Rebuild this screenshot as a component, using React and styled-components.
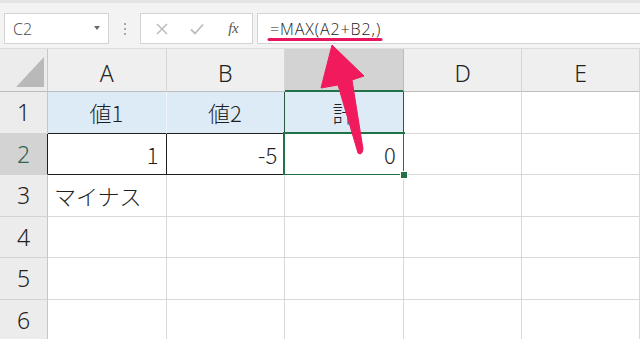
import React from "react";
import styled, { createGlobalStyle } from "styled-components";

const Global = createGlobalStyle`
  html, body { margin: 0; padding: 0; background: #fff; overflow: hidden; }
  #root { width: 640px; height: 339px; }
`;

const Page = styled.div`
  position: relative;
  width: 640px;
  height: 339px;
  overflow: hidden;
  background: #fff;
  font-family: "Noto Sans", "Noto Sans CJK JP", sans-serif;
`;

const Toolbar = styled.div`
  display: flex;
  align-items: flex-start;
  box-sizing: border-box;
  height: 49px;
  padding: 10px 0 0 4px;
  background: #f3f3f3;
  border-top: 3px solid #e4e4e4;
  border-bottom: 1px solid #dcdcdc;
`;

const Box = styled.div`
  box-sizing: border-box;
  height: 31px;
  background: #fff;
  border: 1px solid #d4d4d4;
  display: flex;
  align-items: center;
`;

const NameBox = styled(Box)`
  width: 105px;
  padding: 0 8px 0 8px;
  justify-content: space-between;
  font-family: "Open Sans", "Liberation Sans", Arial, sans-serif;
  font-weight: 300;
  font-size: 16px;
  color: #444;
`;

const Caret = styled.span`
  width: 0;
  height: 0;
  border-left: 3.5px solid transparent;
  border-right: 3.5px solid transparent;
  border-top: 4px solid #6a6a6a;
  margin-top: -2px;
`;

const Grip = styled.div`
  width: 31px;
  height: 31px;
  display: flex;
  flex-direction: column;
  align-items: center;
  justify-content: center;
  gap: 3px;
  & > span {
    width: 2px;
    height: 2px;
    background: #a8a8a8;
  }
`;

const FxBox = styled(Box)`
  width: 113px;
  justify-content: space-around;
  padding: 0 4px 0 4px;
`;

const Fx = styled.span`
  font-family: "Liberation Serif", "DejaVu Serif", serif;
  font-style: italic;
  font-size: 15px;
  color: #555;
  letter-spacing: -0.5px;
  margin-left: 4px;
`;

const FormulaBox = styled(Box)`
  flex: 1;
  margin-left: 4px;
  margin-right: -4px;
  padding-left: 12px;
  font-family: "Open Sans", "Liberation Sans", Arial, sans-serif;
  font-weight: 300;
  font-size: 16px;
  letter-spacing: 0.9px;
  color: #222;
`;

const Sheet = styled.div`
  display: grid;
  grid-template-columns: 48px repeat(4, 118.6px) 1fr;
  grid-template-rows: 43px repeat(6, 41.5px);
`;

const Corner = styled.div`
  box-sizing: border-box;
  background: #ececec;
  border-right: 1px solid #c8c8c8;
  border-bottom: 1px solid #bdbdbd;
  display: flex;
  align-items: flex-end;
  justify-content: flex-end;
  padding: 0 3px 4px 0;
`;

const Tri = styled.div`
  width: 0;
  height: 0;
  border-left: 28px solid transparent;
  border-bottom: 30px solid #b9b9b9;
`;

const ColHead = styled.div`
  box-sizing: border-box;
  background: ${(p) => (p.$selected ? "#d3d3d3" : "#efefef")};
  border-right: 1px solid ${(p) => (p.$selected ? "#bdbdbd" : "#d6d6d6")};
  border-bottom: ${(p) => (p.$selected ? "2px solid #217346" : "1px solid #bdbdbd")};
  display: flex;
  align-items: center;
  justify-content: center;
  padding-top: 6px;
  font-size: 23px;
  font-weight: 300;
  color: #222;
`;

const RowHead = styled.div`
  box-sizing: border-box;
  background: ${(p) => (p.$selected ? "#d3d3d3" : "#ececec")};
  border-right: 1px solid ${(p) => p.$edge || "#c6c6c6"};
  border-bottom: 1px solid #d2d2d2;
  display: flex;
  align-items: center;
  justify-content: center;
  font-size: 23px;
  font-weight: 300;
  color: ${(p) => (p.$selected ? "#2f6450" : "#222")};
`;

const Cell = styled.div`
  position: relative;
  box-sizing: border-box;
  background: ${(p) => p.$fill || "#fff"};
  border-right: 1px solid ${(p) => p.$right || "#d9d9d9"};
  border-bottom: 1px solid ${(p) => p.$bottom || "#d9d9d9"};
  display: flex;
  align-items: center;
  justify-content: ${(p) => (p.$align === "right" ? "flex-end" : p.$align === "center" ? "center" : "flex-start")};
  padding: 0 7px 0 6px;
  font-family: "Noto Sans CJK JP", "Noto Sans", sans-serif;
  font-weight: 300;
  font-size: 22px;
  color: #1f1f1f;
  white-space: nowrap;

  ${(p) =>
    p.$active &&
    `
    &::after {
      content: "";
      position: absolute;
      left: -2px; top: -2px; right: -2px; bottom: -2px;
      border: 2px solid #217346;
      pointer-events: none;
    }
    &::before {
      content: "";
      position: absolute;
      right: -5px; bottom: -5px;
      width: 6px; height: 6px;
      background: #217346;
      border: 1px solid #fff;
      z-index: 2;
    }
  `}
`;

const Overlay = styled.svg`
  position: absolute;
  left: 0;
  top: 0;
  pointer-events: none;
`;

const BLUE = "#ddebf7";
const DARK = "#1f1f1f";
const DGREEN = "#2c5a3f";

const cols = ["A", "B", "C", "D", "E"];

const rows = [
  {
    n: 1,
    cells: [
      { t: "値1", align: "center", fill: BLUE, right: "#eef4fa", bottom: DARK },
      { t: "値2", align: "center", fill: BLUE, right: DGREEN, bottom: DARK },
      { t: "計", align: "center", fill: BLUE, right: DGREEN, bottom: DGREEN },
      {},
      {},
    ],
  },
  {
    n: 2,
    selected: true,
    edge: DARK,
    cells: [
      { t: "1", align: "right", right: DARK, bottom: DARK },
      { t: "-5", align: "right", right: DARK, bottom: DARK },
      { t: "0", align: "right", right: DGREEN, bottom: DGREEN, active: true },
      {},
      {},
    ],
  },
  { n: 3, cells: [{ t: "マイナス" }, {}, {}, {}, {}] },
  { n: 4, cells: [{}, {}, {}, {}, {}] },
  { n: 5, cells: [{}, {}, {}, {}, {}] },
  { n: 6, cells: [{}, {}, {}, {}, {}] },
];

export default function App() {
  return (
    <Page>
      <Global />
      <Toolbar>
        <NameBox>
          <span>C2</span>
          <Caret />
        </NameBox>
        <Grip>
          <span />
          <span />
          <span />
        </Grip>
        <FxBox>
          <svg width="14" height="14" viewBox="0 0 14 14">
            <path d="M2 2 L12 12 M12 2 L2 12" stroke="#bdbdbd" strokeWidth="1.6" fill="none" />
          </svg>
          <svg width="16" height="14" viewBox="0 0 16 14">
            <path d="M2 7.5 L6 11.5 L14 2.5" stroke="#bdbdbd" strokeWidth="1.8" fill="none" />
          </svg>
          <Fx>fx</Fx>
        </FxBox>
        <FormulaBox>=MAX(A2+B2,)</FormulaBox>
      </Toolbar>
      <Sheet>
        <Corner>
          <Tri />
        </Corner>
        {cols.map((c) => (
          <ColHead key={c} $selected={c === "C"}>
            {c}
          </ColHead>
        ))}
        {rows.map((r) => (
          <React.Fragment key={r.n}>
            <RowHead $selected={r.selected} $edge={r.edge}>
              {r.n}
            </RowHead>
            {r.cells.map((c, i) => (
              <Cell
                key={i}
                $align={c.align}
                $fill={c.fill}
                $right={c.right}
                $bottom={c.bottom}
                $active={c.active}
              >
                {c.t}
              </Cell>
            ))}
          </React.Fragment>
        ))}
      </Sheet>
      <Overlay width="640" height="339" viewBox="0 0 640 339">
        <line x1="269" y1="39.5" x2="381" y2="39.5" stroke="#e8175d" strokeWidth="3" strokeLinecap="round" />
        <path
          d="M332 45 L364 76 L352 80 L363 149 Q362 156 358 153 L338 85 L321 88 Z"
          fill="#f01a5c"
          stroke="#f01a5c"
          strokeWidth="1"
          strokeLinejoin="round"
        />
      </Overlay>
    </Page>
  );
}
